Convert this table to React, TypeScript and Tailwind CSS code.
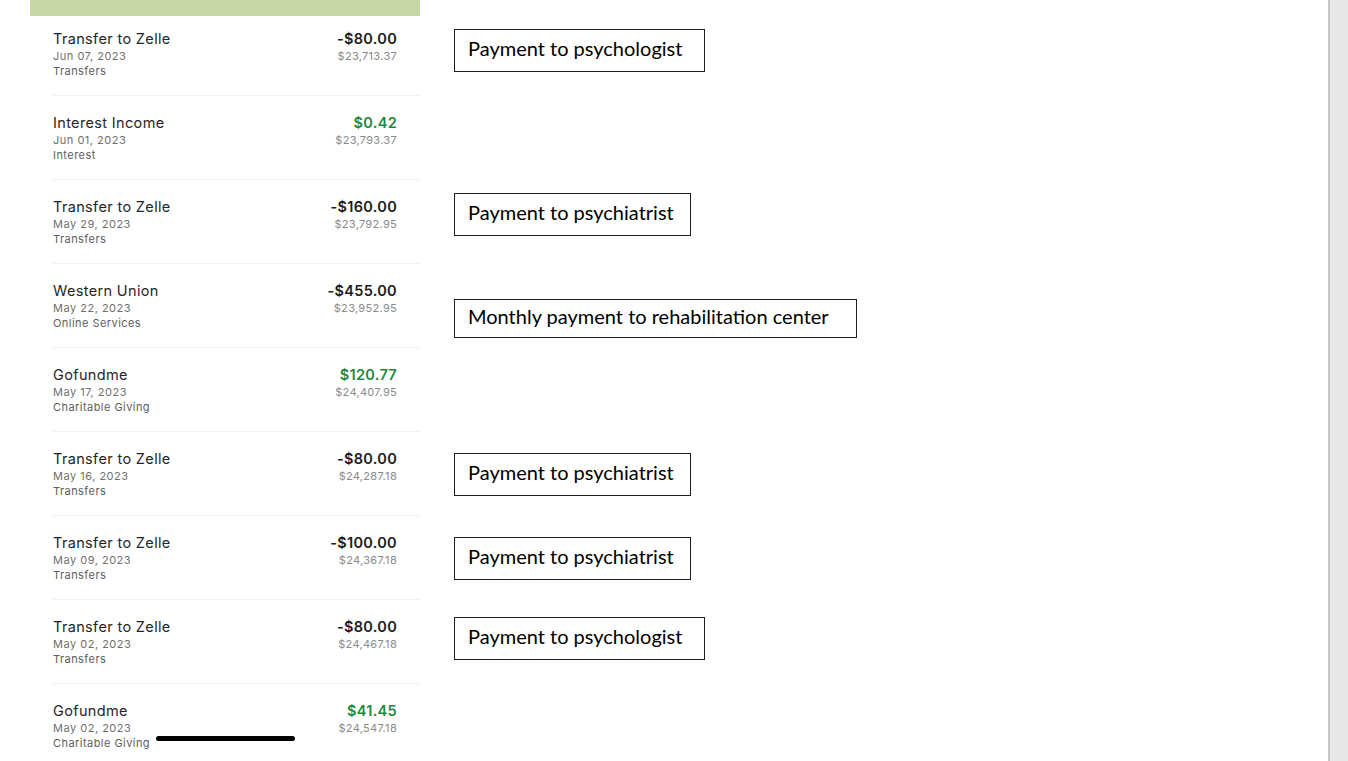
import React from "react";

type Row = {
  name: string;
  date: string;
  cat: string;
  amount: string;
  positive?: boolean;
  balance: string;
  note?: { text: string; mt: string; w: string; h: string };
};

const rows: Row[] = [
  { name: "Transfer to Zelle", date: "Jun 07, 2023", cat: "Transfers", amount: "-$80.00", balance: "$23,713.37", note: { text: "Payment to psychologist", mt: "mt-[13px]", w: "w-[251px]", h: "h-[43px]" } },
  { name: "Interest Income", date: "Jun 01, 2023", cat: "Interest", amount: "$0.42", positive: true, balance: "$23,793.37" },
  { name: "Transfer to Zelle", date: "May 29, 2023", cat: "Transfers", amount: "-$160.00", balance: "$23,792.95", note: { text: "Payment to psychiatrist", mt: "mt-[9px]", w: "w-[237px]", h: "h-[43px]" } },
  { name: "Western Union", date: "May 22, 2023", cat: "Online Services", amount: "-$455.00", balance: "$23,952.95", note: { text: "Monthly payment to rehabilitation center", mt: "mt-[31px]", w: "w-[403px]", h: "h-[39px]" } },
  { name: "Gofundme", date: "May 17, 2023", cat: "Charitable Giving", amount: "$120.77", positive: true, balance: "$24,407.95" },
  { name: "Transfer to Zelle", date: "May 16, 2023", cat: "Transfers", amount: "-$80.00", balance: "$24,287.18", note: { text: "Payment to psychiatrist", mt: "mt-[17px]", w: "w-[237px]", h: "h-[43px]" } },
  { name: "Transfer to Zelle", date: "May 09, 2023", cat: "Transfers", amount: "-$100.00", balance: "$24,367.18", note: { text: "Payment to psychiatrist", mt: "mt-[17px]", w: "w-[237px]", h: "h-[43px]" } },
  { name: "Transfer to Zelle", date: "May 02, 2023", cat: "Transfers", amount: "-$80.00", balance: "$24,467.18", note: { text: "Payment to psychologist", mt: "mt-[13px]", w: "w-[251px]", h: "h-[43px]" } },
  { name: "Gofundme", date: "May 02, 2023", cat: "Charitable Giving", amount: "$41.45", positive: true, balance: "$24,547.18" },
];

function TxRow({ r }: { r: Row }) {
  return (
    <div className="flex h-[84px] shrink-0">
      <div className="w-[390px] shrink-0 flex flex-col">
        <div className="h-[79px] flex pl-[23px] pr-[23px] pt-[14px]">
          <div className="flex-1 flex flex-col">
            <div className="text-[14.5px] leading-[18px] text-[#262626] tracking-[0.35px]">{r.name}</div>
            <div className="text-[11px] leading-[16px] text-[#707070] tracking-[0.5px]">{r.date}</div>
            <div className="text-[11px] leading-[14px] text-[#5e5e5e] tracking-[0.45px]">{r.cat}</div>
          </div>
          <div className="flex flex-col items-end">
            <div className={`text-[14.5px] leading-[18px] font-semibold tracking-[0.3px] ${r.positive ? "text-[#22893a]" : "text-[#1c1c1c]"}`}>{r.amount}</div>
            <div className="text-[11px] leading-[16px] text-[#8a8a8a] tracking-[0.3px]">{r.balance}</div>
          </div>
        </div>
        <div className="ml-[23px] h-px bg-[#f1f1f1]" />
      </div>
      <div className="pl-[34px]">
        {r.note && (
          <div
            className={`${r.note.mt} ${r.note.w} ${r.note.h} border-[1.5px] border-[#1e1e1e] flex items-center pl-[13px] pb-[5px] text-[20px] text-black whitespace-nowrap`}
            style={{ fontFamily: "Lato, 'Open Sans', sans-serif" }}
          >
            {r.note.text}
          </div>
        )}
      </div>
    </div>
  );
}

export default function App() {
  return (
    <div className="w-[1348px] h-[761px] bg-white flex overflow-hidden" style={{ fontFamily: "Inter, 'Liberation Sans', sans-serif" }}>
      <div className="w-[1328px] shrink-0 relative">
        <div className="h-[750px] overflow-hidden flex flex-col">
          <div className="flex shrink-0">
            <div className="ml-[30px] w-[390px] h-[16px] bg-[#c8d6a6]" />
          </div>
          <div className="ml-[30px] flex flex-col">
            {rows.map((r, i) => (
              <TxRow key={i} r={r} />
            ))}
          </div>
        </div>
        <div className="absolute left-[156px] top-[736px] w-[139px] h-[5px] rounded-full bg-black" />
      </div>
      <div className="flex-1 border-l-2 border-[#c6c6c6] bg-[#e7e7e7]" />
    </div>
  );
}
